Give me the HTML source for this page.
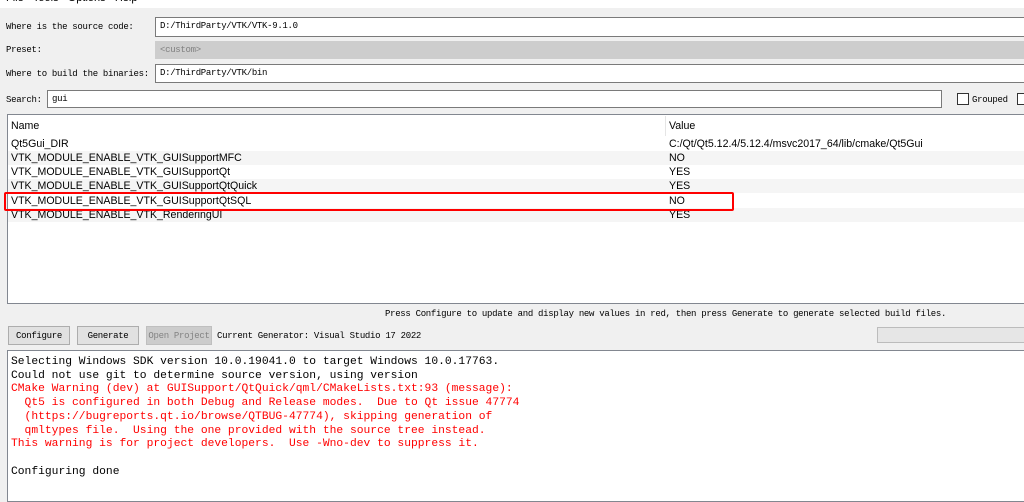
<!DOCTYPE html>
<html><head><meta charset="utf-8"><style>
*{margin:0;padding:0;box-sizing:border-box}
body{width:1024px;height:500px;overflow:hidden;background:#f0f0f0;position:relative;font-family:"Liberation Mono",monospace;}
.a{position:absolute;white-space:pre}
.lbl{font-size:9px;letter-spacing:-0.3px;color:#000;}
.inp{position:absolute;background:#fff;border:1px solid #7a7a7a;font-size:9px;letter-spacing:-0.3px;padding:3px 0 0 4px;white-space:pre}
.tbl{font-family:"Liberation Sans",sans-serif;font-size:10.6px;color:#000}
.row{position:absolute;left:8px;width:1016px;height:14.3px;padding-left:3px;line-height:15px}
.row span{position:absolute;left:661px}
.sh{background:#f5f5f5}
.btn{position:absolute;top:326px;height:19px;border:1px solid #adadad;background:#e1e1e1;font-size:9px;letter-spacing:-0.3px;text-align:center;line-height:18px}
.out{font-size:11.3px;line-height:13.7px;}
.r{color:#f00}
</style></head><body>
<div class="a" style="left:0;top:0;width:1024px;height:8px;background:#fff"></div>
<div class="a" style="left:6px;top:-8px;font-family:'Liberation Sans',sans-serif;font-size:11px;color:#000">File &nbsp;&nbsp;Tools &nbsp;&nbsp;Options &nbsp;&nbsp;Help</div>

<div class="a lbl" style="left:6px;top:22px">Where is the source code:</div>
<div class="inp" style="left:155px;top:17px;width:880px;height:20px">D:/ThirdParty/VTK/VTK-9.1.0</div>
<div class="a lbl" style="left:6px;top:45px">Preset:</div>
<div class="inp" style="left:155px;top:41px;width:880px;height:18px;background:#cdcdcd;border-color:#cdcdcd;color:#808080">&lt;custom&gt;</div>
<div class="a lbl" style="left:6px;top:69px">Where to build the binaries:</div>
<div class="inp" style="left:155px;top:64px;width:880px;height:19px">D:/ThirdParty/VTK/bin</div>
<div class="a lbl" style="left:6px;top:95px">Search:</div>
<div class="inp" style="left:47px;top:90px;width:895px;height:18px">gui</div>
<div class="a" style="left:957px;top:93px;width:12px;height:12px;background:#fff;border:1px solid #333"></div>
<div class="a lbl" style="left:972px;top:95px">Grouped</div>
<div class="a" style="left:1017px;top:93px;width:12px;height:12px;background:#fff;border:1px solid #333"></div>

<div class="a" style="left:7px;top:114px;width:1020px;height:190px;background:#fff;border:1px solid #828790"></div>
<div class="a tbl" style="left:11px;top:120px">Name</div>
<div class="a" style="left:665px;top:116px;width:1px;height:20px;background:#e5e5e5"></div>
<div class="a tbl" style="left:669px;top:120px">Value</div>
<div class="tbl">
<div class="row" style="top:137px">Qt5Gui_DIR<span>C:/Qt/Qt5.12.4/5.12.4/msvc2017_64/lib/cmake/Qt5Gui</span></div>
<div class="row sh" style="top:151px">VTK_MODULE_ENABLE_VTK_GUISupportMFC<span>NO</span></div>
<div class="row" style="top:165px">VTK_MODULE_ENABLE_VTK_GUISupportQt<span>YES</span></div>
<div class="row sh" style="top:179px">VTK_MODULE_ENABLE_VTK_GUISupportQtQuick<span>YES</span></div>
<div class="row" style="top:194px">VTK_MODULE_ENABLE_VTK_GUISupportQtSQL<span>NO</span></div>
<div class="row sh" style="top:208px">VTK_MODULE_ENABLE_VTK_RenderingUI<span>YES</span></div>
</div>
<div class="a" style="left:4px;top:192px;width:730px;height:19px;border:2px solid #f00;border-radius:2px"></div>

<div class="a lbl" style="left:385px;top:309px">Press Configure to update and display new values in red, then press Generate to generate selected build files.</div>
<div class="btn" style="left:8px;width:62px">Configure</div>
<div class="btn" style="left:77px;width:62px">Generate</div>
<div class="btn" style="left:146px;width:66px;background:#ccc;border-color:#bfbfbf;color:#838383">Open Project</div>
<div class="a lbl" style="left:217px;top:331px">Current Generator: Visual Studio 17 2022</div>
<div class="a" style="left:877px;top:327px;width:150px;height:16px;background:#e6e6e6;border:1px solid #bcbcbc"></div>

<div class="a" style="left:7px;top:350px;width:1020px;height:152px;background:#fff;border:1px solid #828790"></div>
<div class="a out" style="left:11px;top:356px">Selecting Windows SDK version 10.0.19041.0 to target Windows 10.0.17763.
Could not use git to determine source version, using version
<span class="r">CMake Warning (dev) at GUISupport/QtQuick/qml/CMakeLists.txt:93 (message):
  Qt5 is configured in both Debug and Release modes.  Due to Qt issue 47774
  (https://bugreports.qt.io/browse/QTBUG-47774), skipping generation of
  qmltypes file.  Using the one provided with the source tree instead.
This warning is for project developers.  Use -Wno-dev to suppress it.</span>

Configuring done</div>
</body></html>
